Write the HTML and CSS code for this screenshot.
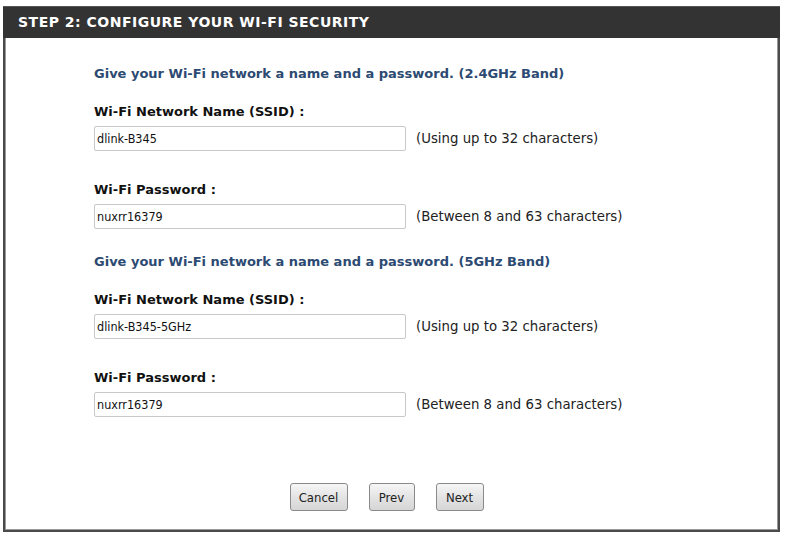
FILE: index.html
```html
<!DOCTYPE html>
<html>
<head>
<meta charset="utf-8">
<link rel="stylesheet" href="styles.css">
</head>
<body>
<div class="frame">
  <div class="header">STEP 2: CONFIGURE YOUR WI-FI SECURITY</div>
  <div class="content">
    <div class="band">Give your Wi-Fi network a name and a password. (2.4GHz Band)</div>
    <div class="label first">Wi-Fi Network Name (SSID) :</div>
    <div class="row"><div class="input">dlink-B345</div><span class="hint">(Using up to 32 characters)</span></div>
    <div class="label">Wi-Fi Password :</div>
    <div class="row"><div class="input">nuxrr16379</div><span class="hint">(Between 8 and 63 characters)</span></div>
    <div class="band second">Give your Wi-Fi network a name and a password. (5GHz Band)</div>
    <div class="label first">Wi-Fi Network Name (SSID) :</div>
    <div class="row"><div class="input">dlink-B345-5GHz</div><span class="hint">(Using up to 32 characters)</span></div>
    <div class="label">Wi-Fi Password :</div>
    <div class="row"><div class="input">nuxrr16379</div><span class="hint">(Between 8 and 63 characters)</span></div>
    <div class="buttons">
      <button class="btn cancel">Cancel</button>
      <button class="btn prev">Prev</button>
      <button class="btn next">Next</button>
    </div>
  </div>
</div>
</body>
</html>
```
FILE: styles.css
```css
html, body {
  margin: 0;
  padding: 0;
  background: #ffffff;
}
body {
  font-family: "DejaVu Sans", sans-serif;
}
.frame {
  margin: 6px 0 0 3px;
  width: 773px;
  border: 2px solid #4a4a4a;
  border-top: none;
  box-shadow: inset 1px 0 0 #9a9a9a, inset -1px 0 0 #9a9a9a, inset 0 -1px 0 #9a9a9a;
}
.header {
  background: #333333;
  border-top: 1px solid #555;
  height: 31px;
  margin: 0 -2px;
  padding-left: 15px;
  color: #ffffff;
  font-family: "DejaVu Sans", sans-serif;
  font-weight: bold;
  font-size: 14px;
  line-height: 31px;
  letter-spacing: 0.5px;
}
.content {
  padding: 28px 0 19px 89px;
}
.band {
  color: #2c4a72;
  font-weight: bold;
  font-size: 13px;
  line-height: 16px;
}
.band.second {
  margin-top: 25px;
}
.label {
  color: #111;
  font-weight: bold;
  font-size: 13px;
  line-height: 16px;
  margin-top: 31px;
  margin-bottom: 6px;
}
.label.first {
  margin-top: 22px;
}
.row {
  display: flex;
  align-items: center;
  gap: 10px;
}
.input {
  box-sizing: border-box;
  width: 312px;
  height: 25px;
  border: 1px solid #c8c8c8;
  border-radius: 2px;
  padding-left: 2px;
  font-family: "DejaVu Sans Condensed", "DejaVu Sans", sans-serif;
  font-size: 12.5px;
  line-height: 23px;
  color: #111;
}
.hint {
  font-size: 13.3px;
  color: #222;
}
.buttons {
  display: flex;
  justify-content: center;
  gap: 21px;
  margin-top: 66px;
  margin-left: -89px;
  padding-right: 10px;
}
.btn {
  box-sizing: border-box;
  height: 28px;
  border: 1px solid #8a8a8a;
  border-radius: 3px;
  background: linear-gradient(#f6f6f6, #e2e2e2 55%, #d6d6d6);
  font-family: "DejaVu Sans Condensed", "DejaVu Sans", sans-serif;
  font-size: 13px;
  color: #222;
  padding: 0;
}
.cancel { width: 58px; }
.prev { width: 46px; }
.next { width: 48px; }
```
